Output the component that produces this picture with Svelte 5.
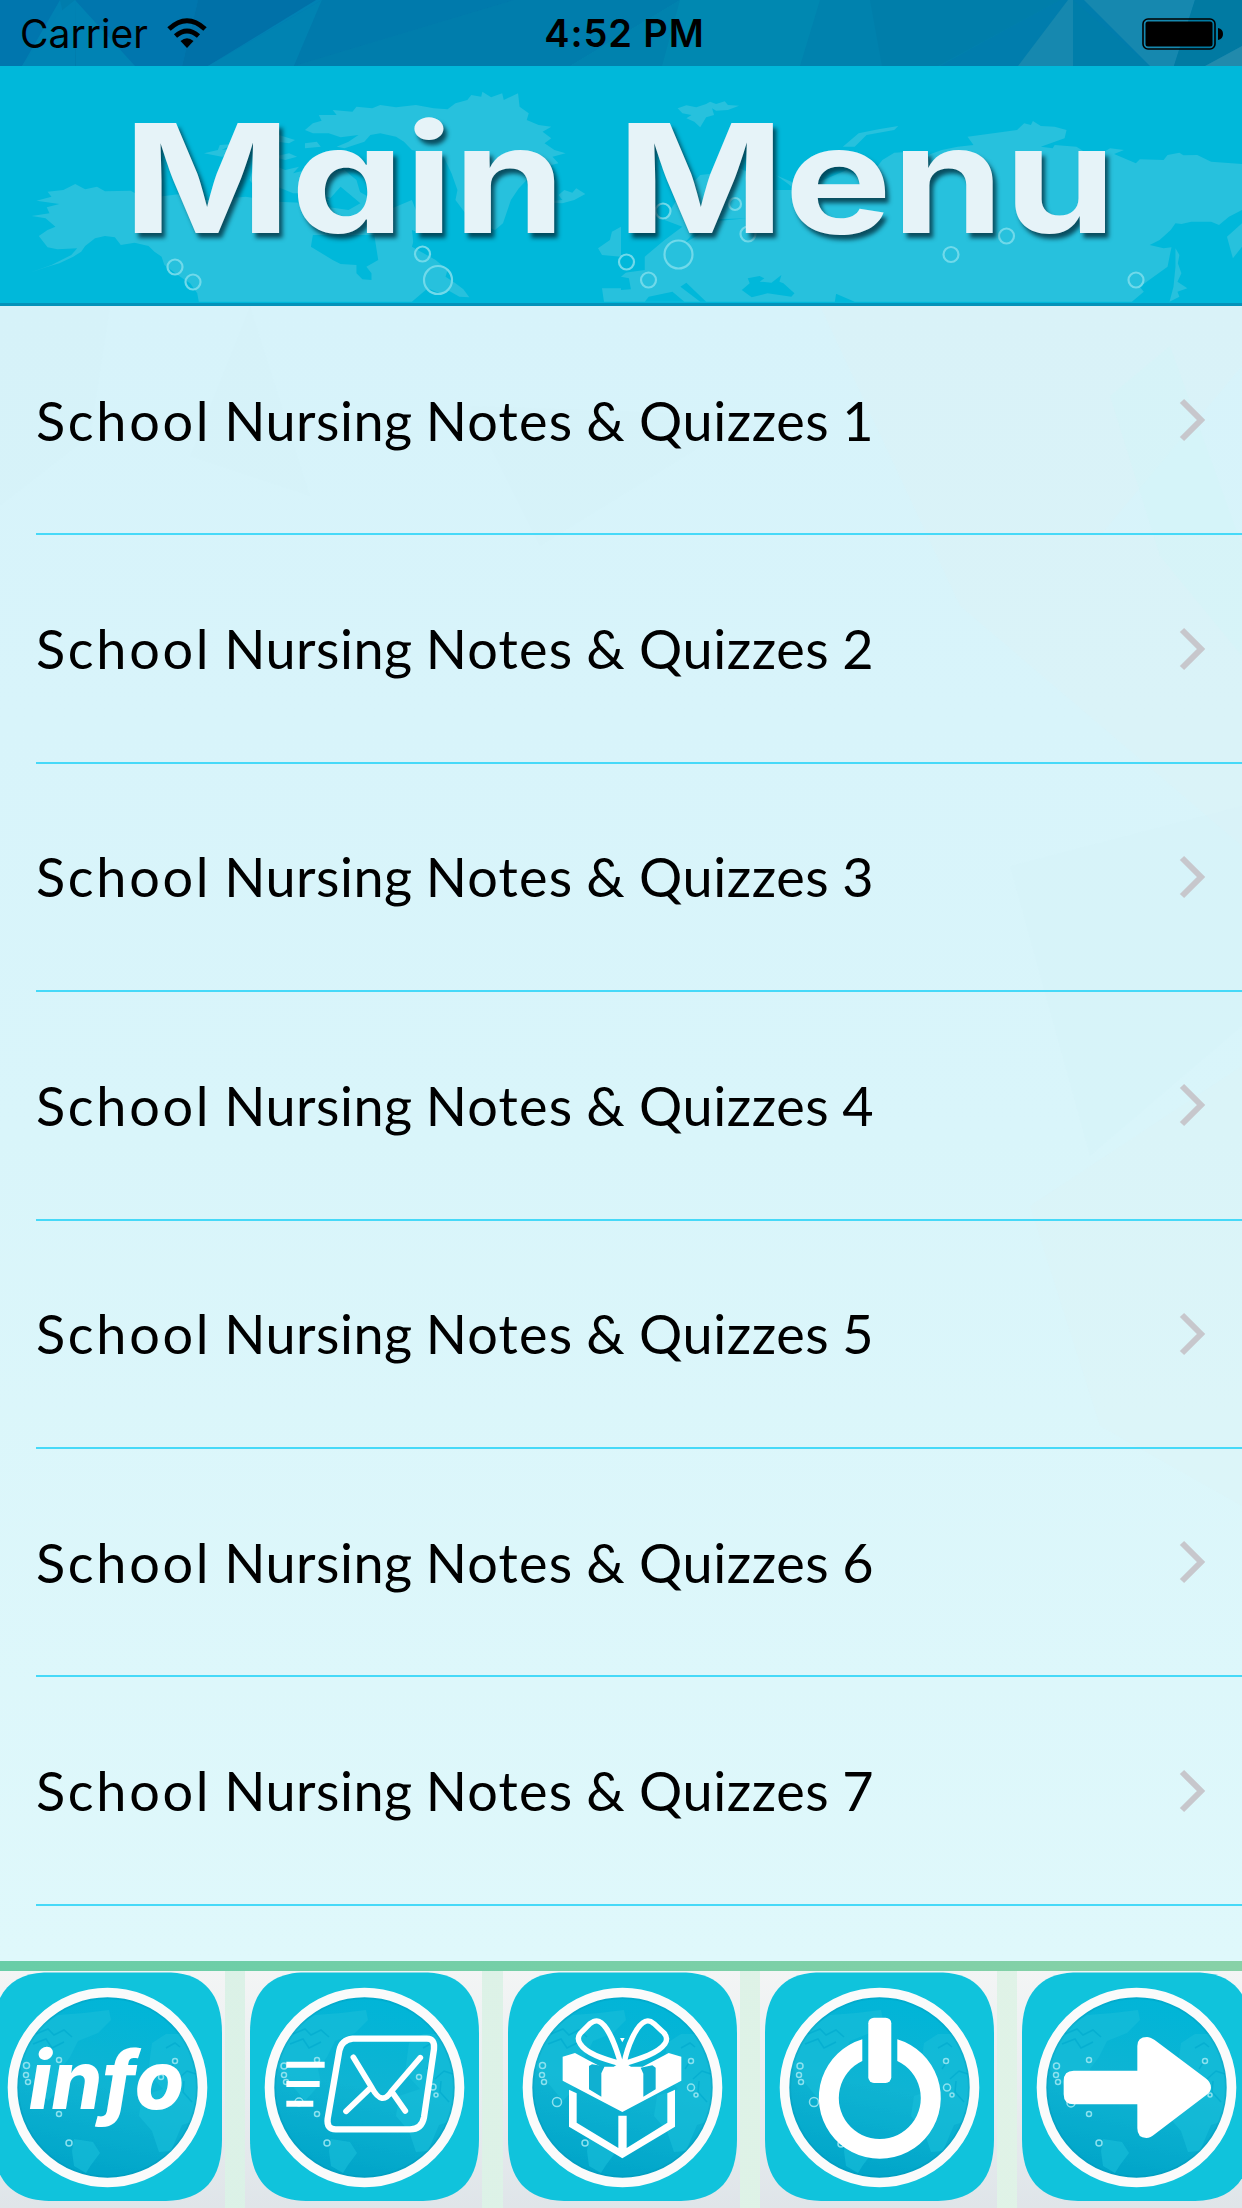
<script lang="ts">
  type Tab = "info" | "mail" | "gift" | "power" | "next";

  const rows = [1, 2, 3, 4, 5, 6, 7];
  const tabs: Tab[] = ["info", "mail", "gift", "power", "next"];

  // x, y, radius
  const bubbles = [
    [175, 267, 7.5], [193, 282, 7.5], [422.5, 254, 7.5], [438, 280, 14],
    [663, 211, 7.5], [735, 204, 6], [748, 234, 7.5], [678.5, 254.5, 14],
    [626.5, 262, 7.5], [648.5, 280, 7.5], [951, 254.5, 7.5], [1006.5, 236, 7.5],
    [1136, 280, 7.5],
  ];

  const dots: Record<Tab, number[][]> = {
    info: [[38.5, 94.5, 3], [38, 104, 2.5], [40, 111, 2.5], [71, 89, 2.5], [187, 90, 2.5], [173, 106, 2.5], [71, 143, 2.5], [81, 172, 3]],
    mail: [[39, 95, 3], [39, 104, 2.5], [41, 111, 2.5], [72, 89, 2.5], [54, 131, 4], [174, 106, 2.5], [188, 116, 3], [191, 124, 2], [72, 143, 2.5], [82, 172, 3]],
    gift: [[39.5, 94.5, 3], [39, 104, 2.5], [41, 111, 2.5], [54, 131, 4.5], [188, 90, 2.5], [188, 116.5, 3.5], [193, 124, 2], [82, 172, 3]],
    power: [[40, 95, 3], [39, 104, 2.5], [41, 111, 2.5], [54, 131, 4.5], [186, 90, 2.5], [187, 116.5, 3.5], [192, 124, 2], [81, 173, 3]],
    next: [[39.5, 95, 3], [39, 104, 2.5], [41, 111, 2.5], [72, 89, 2.5], [54, 132, 4], [188, 90, 2.5], [193, 124, 2], [72, 143, 2.5], [82, 172, 3]],
  };
</script>

<div class="screen">
  <div class="status">
    <svg class="backdrop" viewBox="0 0 1242 66" preserveAspectRatio="none" aria-hidden="true">
      <path fill="#0082b4" d="M0 0H60L75 66H0ZM198 0H322L208 66H180Z" />
      <path fill="#0076ae" d="M0 0H60L22 66H0ZM76 0H198L182 66H135L76 28Z" />
      <path fill="#0083b4" d="M75 0L135 66H76ZM60 12L75 0V66H22Z" />
      <path fill="#0071a8" d="M198 0H316L208 66H182Z" />
      <path fill="#0083b2" d="M322 0L294 66H208Z" />
      <path fill="#007aac" d="M322 0H514L294 66Z" />
      <path fill="#007dac" d="M514 0H680L570 66H294Z" />
      <path fill="#0088b1" d="M680 0H870L882 66H570Z" />
      <path fill="#0082ae" d="M680 0L662 66H570ZM820 0H1060L940 66H800Z" />
      <path fill="#007eaa" d="M870 0H1060L938 66H882ZM1073 0L1150 66H1073Z" />
      <path fill="#1688af" d="M1068 0H1073V66H1018ZM1084 0H1195L1174 66H1150Z" />
      <path fill="#017aa2" d="M1195 0H1242V46L1205 66H1174Z" />
      <path fill="#218aac" d="M1242 46V66H1205Z" />
    </svg>
    <div class="carrier">
      <span>Carrier</span>
      <svg width="40" height="31" viewBox="0 0 40 31" aria-hidden="true">
        <path d="M2 11Q20 -5.5 38 11" fill="none" stroke="#000" stroke-width="5" />
        <path d="M8.500 18Q20 8 31.500 18" fill="none" stroke="#000" stroke-width="4.800" />
        <path d="M13.500 23Q20 17.500 26.500 23L20 30Z" />
      </svg>
    </div>
    <span class="clock">4:52 PM</span>
    <svg class="battery" width="82" height="32" viewBox="0 0 82 32" aria-label="Battery full">
      <rect x="1" y="1" width="72" height="30" rx="5" fill="none" stroke="#000" stroke-width="1.600" />
      <rect x="3.500" y="3.500" width="67" height="25" rx="2.500" />
      <path d="M76 10Q81 11 81 16T76 22Z" />
    </svg>
  </div>

  <header>
    <svg class="backdrop" viewBox="0 66 1242 237" aria-hidden="true">
      <g fill="#27c1dd">
        <g transform="scale(.39605 .33333)">
          <path d="M190 552L215 568L245 560L265 574L330 572L345 582L400 590L470 580L520 600L620 590L700 605L790 610L850 590L900 570L930 590L960 640L1040 600L1060 660L1040 740L1100 780L1130 810L1125 830L1150 850L1170 868L1185 892L1160 890L1130 870L1110 880L1080 865L1040 905H502L498 880L480 850L455 830L415 795L408 770L390 755L375 738L340 728L305 735L290 712L265 708L240 715L215 738L205 755L185 770L150 790L120 800L75 818L130 795L180 765L195 745L145 748L120 742L98 708L120 690L140 680L115 655L80 648L125 640L118 622L150 612L92 602L130 590L120 575L160 570Z" />
          <path d="M770 390L790 370L812 362L805 345L850 345L840 330L890 335L900 320L940 325L960 315L1000 322L1050 315L1095 325L1130 328L1150 310L1180 300L1190 285L1215 290L1218 275L1240 292L1268 280L1272 300L1308 280L1312 320L1335 340L1330 360L1360 375L1392 380L1370 395L1392 415L1375 430L1400 450L1428 460L1395 470L1410 490L1375 500L1390 520L1330 540L1310 565L1290 600L1270 670L1250 690L1200 665L1175 640L1150 600L1155 570L1140 520L1120 470L1040 450L1020 425L1000 410L960 400L935 405L920 425L870 445L850 440L880 425L905 405L860 412L830 400L790 400Z" />
          <path d="M515 460L550 450L555 435L590 432L560 450L600 445L590 465L560 470ZM580 425L620 430L610 415L650 425ZM690 400L745 420L730 430L700 425ZM770 430L800 425L810 440L770 445ZM690 470L730 460L750 470L720 480ZM640 500L690 495L720 510L755 500L740 520L790 505L830 520L870 510L900 540L910 580L850 600L800 580L740 580L700 560L650 570L630 540ZM730 540L770 540L760 555Z" />
          <path d="M1370 595L1395 602L1420 600L1410 585L1425 570L1445 578L1455 565L1478 582L1450 600L1420 610L1390 608ZM1510 745L1540 720L1545 695L1568 680V770L1520 765ZM1520 865H1568V905H1525Z" />
        </g>
        <g transform="translate(621 0) scale(.39605 .33333)">
          <path d="M143 325L165 316L190 322L215 312L225 305L240 312L262 304L270 315L298 317L270 330L240 332L230 325L235 345L215 352L200 382L185 365L165 355L178 345L155 340ZM560 440L600 400L650 388L700 378L690 390L620 405L590 440Z" />
          <path d="M140 600L200 525L240 520L290 500L370 540L390 525L430 545L440 565L465 560L460 540L500 545L570 510L620 540L660 480L690 458L730 455L740 480L810 450L850 440L890 435L875 410L940 400L1000 390L1018 370L1035 375L1040 363L1060 378L1095 380L1125 390L1120 415L1060 440L1090 445L1095 435L1150 440L1170 455L1220 455L1235 445L1270 450L1245 462L1300 490L1310 478L1370 480L1380 465L1410 458L1420 466L1455 465L1490 485L1568 492V630L1535 650L1510 675L1490 665L1440 665L1415 672L1400 670L1388 690L1360 720L1335 735L1370 745L1390 742L1385 770L1380 800L1345 830L1310 860L1320 875L1290 905H590L540 880L495 865L500 840L550 828L540 905H0V870L25 868L20 835L0 830V820L60 810L60 770L110 720L155 680L110 660Z" />
          <path d="M1400 745L1410 765L1406 790L1415 820L1405 845L1430 865L1405 875L1410 890L1385 905L1395 860L1400 800ZM1530 710L1568 670V740L1545 775Z" />
        </g>
      </g>
      <g fill="#00b8da" transform="translate(621 0) scale(.39605 .33333)">
        <path d="M305 870L325 850L320 835L350 828L362 835L350 845L380 848L405 825L400 845L410 850L438 880L430 890L370 880L330 892ZM160 640L190 690L160 730L195 705L235 675L220 665L320 655L240 658L180 650ZM0 710L40 740L48 760L40 790L0 830Z" />
        <path d="M130 875L160 905H60L70 890ZM165 848L215 905H200L150 860ZM380 515L420 550L440 570L370 570Z" />
      </g>
      <path fill="#00b8da" transform="scale(.39605 .33333)" d="M790 705H945L955 780L925 800L938 820L938 840L915 838L900 820V795L860 792L840 780L785 740ZM750 585L830 600L860 560L910 610L880 630L760 610ZM1040 690L1060 700L1045 740Z" />
      {#each bubbles as [cx, cy, r]}
        <circle {cx} {cy} {r} fill="none" stroke="#70d9ea" stroke-width="2.200" />
      {/each}
    </svg>
    <h1><span>Main</span> <span>Menu</span></h1>
  </header>

  <main>
    <svg class="backdrop" viewBox="0 0 1242 1655" preserveAspectRatio="none" aria-hidden="true">
      <path fill="#d4f2f8" opacity=".3" d="M0 0H110L90 130L0 200ZM250 0L310 190L190 150ZM470 100L750 110L540 240ZM1010 560L1242 500V720L1090 850Z" />
      <path fill="#dff3f5" opacity=".3" d="M820 0H1242V60L1100 230H1242V540L960 300ZM1030 900L1242 760V1200L1100 1120Z" />
      <path fill="#d2f5f8" opacity=".4" d="M1110 90L1170 40L1242 240V350L1160 250Z" />
    </svg>
    <ul>
      {#each rows as n (n)}
        <li>
          <span class="label">
            <span class="school">School</span> <span class="nursing">Nursing</span> Notes &amp; <span class="quizzes">Quizzes</span> {n}
          </span>
          <svg width="28" height="44" viewBox="0 0 28 44" aria-hidden="true">
            <path d="M3 3L22 22L3 41" fill="none" stroke="#c7c7cc" stroke-width="6" />
          </svg>
        </li>
      {/each}
    </ul>
  </main>

  <nav>
    {#each tabs as tab (tab)}
      <button aria-label={tab}>
        <svg viewBox="0 0 237 237" width="237" height="237">
          <defs>
            <linearGradient id="sea-{tab}" x1=".6" y1="0" x2=".4" y2="1">
              <stop offset="0" stop-color="#00b5d8" />
              <stop offset=".5" stop-color="#10b4d3" />
              <stop offset="1" stop-color="#00a4c8" />
            </linearGradient>
            <clipPath id="globe-{tab}"><circle cx="119.500" cy="116.500" r="91" /></clipPath>
          </defs>
          <path fill="#10c3dc" d="M56 1.500H183C216 3 234 23 234 62V168C234 208 216 229 178 230H61C23 229 5 208 5 168V62C5 23 23 3 56 1.500Z" />
          <circle cx="119.500" cy="116.500" r="95" fill="url(#sea-{tab})" />
          <g clip-path="url(#globe-{tab})" fill="#18bdd9" opacity=".65">
            <path d="M45 60L70 44L96 42L121 39L123 49L110 62L90 70L82 86L73 98L76 112L60 130L45 112L28 92Z" />
            <path d="M86 168L105 171L112 182L103 194L98 202L86 195L84 180ZM164 72L178 63L194 63L212 78V148L194 154L183 180L171 181L164 160L151 145L154 125L175 118L160 102Z" />
          </g>
          <g clip-path="url(#globe-{tab})" fill="none" stroke="#04acd0" stroke-width="1.500" opacity=".8">
            <path d="M48 63L60 58L66 64L76 59L84 66M45 73L58 68L64 77L76 71M178 77L187 72L192 76M188 89L182 98M190 108L199 100L208 103M196 110L195 121L204 131" />
          </g>
          <circle cx="119.500" cy="116.500" r="90" fill="none" stroke="#0587aa" stroke-width="3" opacity=".22" />
          <circle cx="119.500" cy="116.500" r="95" fill="none" stroke="#fafbfb" stroke-width="9.600" />
          <g fill="none" stroke="#8be1ef" stroke-width="1.500">
            {#each dots[tab] as [cx, cy, r]}
              <circle {cx} {cy} {r} />
            {/each}
          </g>

          {#if tab === "info"}
            <text x="41" y="138" textLength="155" lengthAdjust="spacingAndGlyphs">info</text>
          {:else if tab === "mail"}
            <g transform="translate(0 -21) scale(.33333)" fill="none" stroke="#fff" stroke-linejoin="round">
              <path stroke-width="19" d="M323 266H546Q570 266 567 297L537 502Q530 538 495 538H272Q244 538 248 506L283 302Q289 270 323 266Z" />
              <path stroke-width="17" stroke-linecap="round" d="M325 322L381 414Q411 470 440 423L526 323M375 415L303 484M441 426L481 483" />
              <path stroke-width="18" d="M124 344H239M124 402H224M124 461H205" />
            </g>
          {:else if tab === "gift"}
            <g transform="translate(-7 -21) scale(.33333)" fill="#fff">
              <path fill="none" stroke="#fff" stroke-width="16" stroke-linejoin="round" d="M374 341C360 290 335 225 308 214Q298 209 282 221L253 250Q241 265 253 282C270 310 320 326 374 341ZM384 341C394 290 420 225 449 214Q460 209 474 221L503 248Q518 264 507 281C487 309 435 326 384 341Z" />
              <path d="M200 320L237 309L280 332L315 350L353 350L379 334L405 350L440 350L480 329L518 309L556 320V392L379 486L200 392Z" />
              <path fill="#10b0d1" d="M279 348L288 343L326 349L316 370V440L279 418ZM434 353L469 346L479 353V418L442 440V371Z" />
              <path d="M219 419L242 430V518L367 594V497H392V594L514 518V430L537 419V530L379 625L219 530Z" />
              <path d="M372 264H386L379 277Z" />
            </g>
          {:else if tab === "power"}
            <g transform="translate(-14.700 -21) scale(.33333)" fill="#fff">
              <path d="M351 268V333A123 123 0 1 0 456 333V268A183 183 0 1 1 351 268Z" />
              <rect x="369" y="203" width="69" height="196" rx="17" />
            </g>
          {:else}
            <g transform="translate(-25 -21) scale(.33333)" fill="#fff">
              <path d="M245 362H436V288Q436 261 465 261Q474 261 488 270L640 384Q657 396 657 413Q657 424 643 435L488 553Q476 564 463 564Q436 564 436 535V463H245Q215 463 215 433V393Q215 362 245 362Z" />
            </g>
          {/if}
        </svg>
      </button>
    {/each}
  </nav>
</div>

<style>
  :global(body) {
    margin: 0;
  }
  .screen {
    display: flex;
    flex-direction: column;
    width: 1242px;
    height: 2208px;
    overflow: hidden;
    background: #d9f4fa;
    color: #000;
  }
  .backdrop {
    position: absolute;
    inset: 0;
    width: 100%;
    height: 100%;
  }
  .status {
    position: relative;
    display: grid;
    grid-template-columns: 1fr auto 1fr;
    align-items: center;
    height: 66px;
    padding: 0 18px 0 20px;
    box-sizing: border-box;
    background: #007dad;
    font-family: Inter, sans-serif;
    font-size: 39px;
  }
  .carrier,
  .clock,
  .battery {
    position: relative;
  }
  .carrier {
    display: flex;
    align-items: center;
    gap: 19px;
  }
  .clock {
    padding-left: 5px;
    font-size: 38px;
    font-weight: 600;
    letter-spacing: 0.9px;
  }
  .battery {
    justify-self: end;
    margin-top: 2px;
  }
  header {
    position: relative;
    height: 240px;
    box-sizing: border-box;
    border-bottom: 3px solid #0492b9;
    background: #00b8da;
  }
  h1 {
    position: relative;
    display: flex;
    gap: 43px;
    margin: 0;
    padding: 21px 0 0 123px;
    font-family: Inter, sans-serif;
    font-feature-settings: "cv11";
    font-size: 151px;
    font-weight: 700;
    line-height: 183px;
    color: #e6f3f8;
    text-shadow: 3px 5px 4px rgb(0 40 55 / 75%);
    transform: scaleX(1.193);
    transform-origin: 123px 0;
  }
  main {
    position: relative;
    height: 1655px;
    background: linear-gradient(#d7f3fa, #d9f5fa 50%, #dff8fb);
  }
  ul {
    position: relative;
    margin: 0;
    padding: 1px 0 0 36px;
    list-style: none;
  }
  li {
    display: flex;
    align-items: center;
    justify-content: space-between;
    height: 228.400px;
    padding-right: 35px;
    box-sizing: border-box;
    border-bottom: 2px solid #46d9f8;
  }
  .label {
    font-family: Lato, sans-serif;
    font-size: 54px;
    letter-spacing: 1.200px;
    word-spacing: -2px;
    white-space: nowrap;
  }
  .school {
    letter-spacing: 2.700px;
  }
  .nursing {
    letter-spacing: 0.500px;
  }
  .quizzes {
    letter-spacing: 0.600px;
  }
  nav {
    display: flex;
    gap: 20.300px;
    width: 1266px;
    height: 247px;
    margin-left: -12px;
    box-sizing: border-box;
    border-style: solid;
    border-width: 10px 0 0;
    border-image: linear-gradient(90deg, #68cda7, #88d1a7) 1;
    background: linear-gradient(90deg, #daf1e7, #e1f3e7);
  }
  button {
    flex: none;
    width: 237px;
    height: 237px;
    padding: 0;
    border: 0;
    background: linear-gradient(#f3f5f5, #e8ecef 55%, #dfe5e9);
  }
  button svg {
    display: block;
  }
  text {
    font: italic 800 81px Inter, sans-serif;
    fill: #fff;
  }
</style>
